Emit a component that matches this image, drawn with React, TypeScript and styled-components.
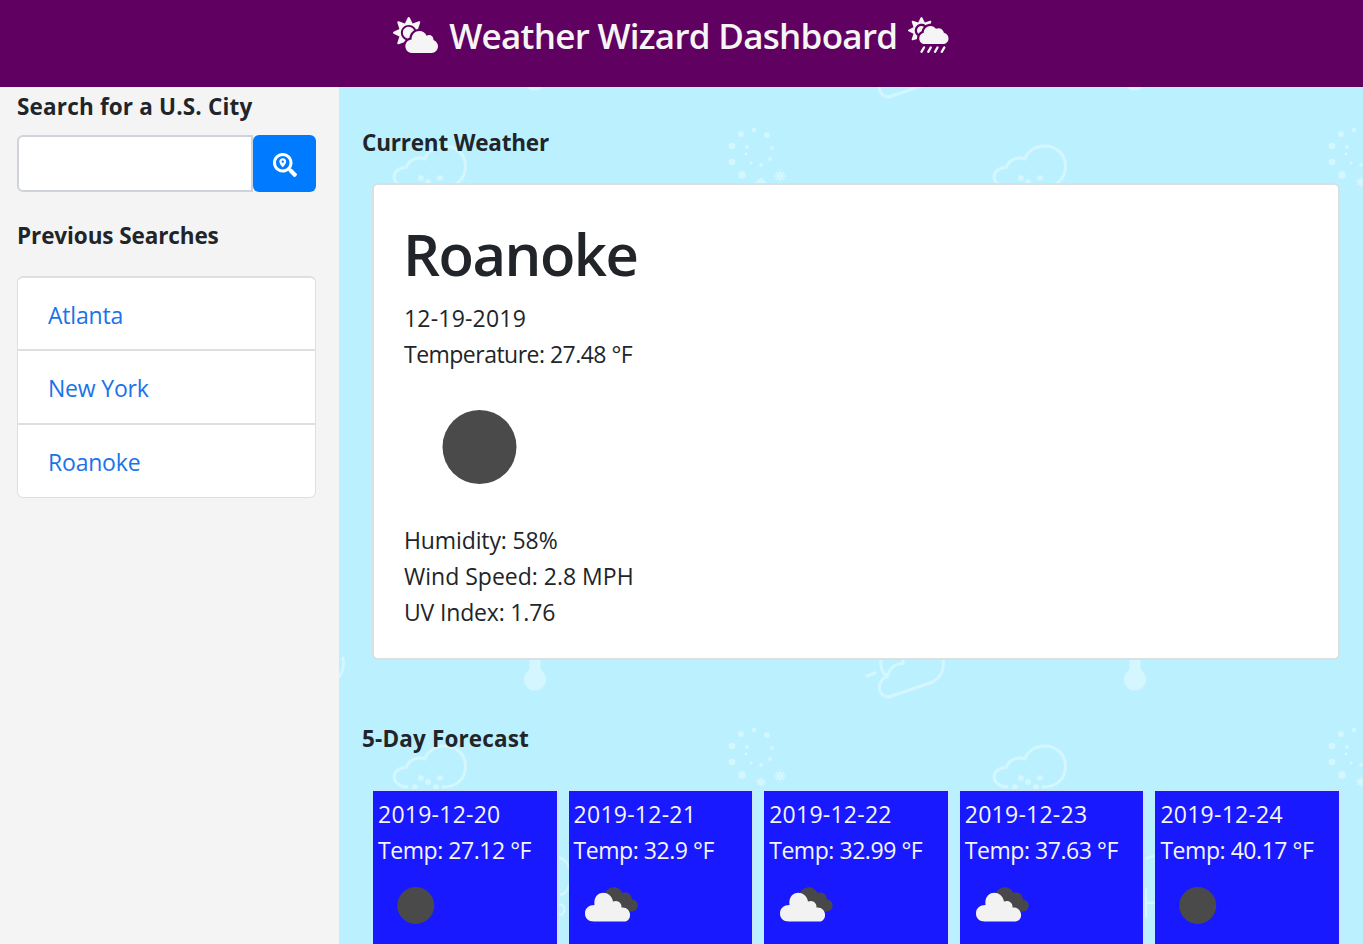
import React from 'react';
import styled, { createGlobalStyle } from 'styled-components';
import { FaCloudSun, FaCloudSunRain, FaSearchLocation } from 'react-icons/fa';

const GlobalStyle = createGlobalStyle`
  *, *::before, *::after { box-sizing: border-box; }
  body {
    margin: 0;
    height: 944px;
    overflow: hidden;
    font-family: "Open Sans", "Noto Sans", sans-serif;
    font-size: 23px;
    line-height: 36px;
    letter-spacing: -0.2px;
    color: #212529;
    background: #bbf0ff;
  }
`;

const Page = styled.div`
  display: flex;
  flex-direction: column;
  height: 944px;
`;

const Header = styled.header`
  display: flex;
  justify-content: center;
  gap: 11px;
  height: 87px;
  flex: none;
  padding: 14px 21px 0 0;
  background: #600060;
  color: #f5f5f5;
`;

const SunIcon = styled(FaCloudSun)`
  flex: none;
  width: 45px;
  height: 36px;
  margin-top: 3px;
`;

const RainIcon = styled(FaCloudSunRain)`
  flex: none;
  width: 40.5px;
  height: 36px;
  margin-top: 3px;
`;

const Title = styled.h1`
  margin: 0;
  font-size: 35px;
  font-weight: 600;
  line-height: 43px;
  letter-spacing: -0.72px;
  white-space: nowrap;
`;

const Body = styled.div`
  display: flex;
  flex: 1;
  min-height: 0;
`;

const Sidebar = styled.aside`
  width: 339px;
  flex: none;
  padding: 2px 23px 0 17px;
  background: #f4f4f4;
`;

const Heading = styled.h2<{ $spacing: number }>`
  margin: 0;
  font-size: 22.5px;
  line-height: 36px;
  font-weight: 700;
  letter-spacing: ${p => p.$spacing}px;
  white-space: nowrap;
`;

const SearchForm = styled.form`
  display: flex;
  height: 57px;
  margin: 10px 0 26px;
`;

const SearchInput = styled.input`
  width: 236px;
  border: 2px solid #ced4da;
  border-radius: 6px 0 0 6px;
  background: #fff;
  padding: 0 18px;
  font: inherit;
  outline: none;
`;

const SearchButton = styled.button`
  display: flex;
  align-items: center;
  justify-content: center;
  flex: 1;
  padding: 2px 0 0;
  border: 0;
  border-radius: 6px;
  background: #007bff;
  color: #fff;
`;

const CityList = styled.ul`
  list-style: none;
  margin: 22px 0 0;
  padding: 0;
  border: 1px solid #dfdfdf;
  border-top-width: 2px;
  border-radius: 6px;
  background: #fff;
`;

const CityItem = styled.li`
  height: 71px;
  padding: 19px 30px 0;
  color: #1a73e8;
  & + & {
    height: 74px;
    border-top: 2px solid #dfdfdf;
  }
`;

const Main = styled.main`
  position: relative;
  flex: 1;
  min-width: 0;
  padding: 38px 24px 0 23px;
  overflow: hidden;
`;

const Backdrop = styled.svg`
  position: absolute;
  inset: 0;
  width: 100%;
  height: 100%;
`;

const Content = styled.div`
  position: relative;
`;

const WeatherCard = styled.section`
  height: 477px;
  margin: 22px -1px 61px 10px;
  padding: 37px 30px 0;
  border: 2px solid #dadfe1;
  border-radius: 6px;
  background: #fff;
`;

const CityName = styled.h3`
  margin: 0 0 14px -1px;
  font-size: 58px;
  font-weight: 600;
  line-height: 64px;
  letter-spacing: -1.5px;
`;

const Line = styled.div<{ $spacing: number }>`
  height: 36px;
  letter-spacing: ${p => p.$spacing}px;
  white-space: nowrap;
`;

const CurrentIcon = styled.svg`
  display: block;
  width: 150px;
  height: 150px;
`;

const Forecast = styled.div`
  display: grid;
  grid-template-columns: repeat(5, 1fr);
  gap: 12px;
  margin: 34px 0 0 11px;
`;

const Day = styled.article`
  height: 160px;
  padding: 5px;
  background: #1919ff;
  color: #f5f5f5;
  box-shadow: 1px -1px 0 1px #cfe6f8;
`;

const DayIcon = styled.svg`
  display: block;
  width: 75px;
  height: 75px;
`;

const cities = ['Atlanta', 'New York', 'Roanoke'];

const days = [
  { date: '2019-12-20', temp: '27.12', clear: true },
  { date: '2019-12-21', temp: '32.9', clear: false },
  { date: '2019-12-22', temp: '32.99', clear: false },
  { date: '2019-12-23', temp: '37.63', clear: false },
  { date: '2019-12-24', temp: '40.17', clear: true },
];

const ringDots = [
  [391, 24, 3], [404, 20, 2.5], [417, 25, 3], [382, 36, 3.5], [382, 52, 3.5],
  [392, 65, 4], [397, 37, 2], [396, 44, 1.5], [401, 53, 1.5], [411, 55, 2],
  [420, 49, 2], [422, 38, 2],
];

const Flake = ({ x, y, r }: { x: number; y: number; r: number }) => (
  <path
    d={`M${x - r} ${y}h${2 * r}M${x} ${y - r}v${2 * r}M${x - r * 0.7} ${y - r * 0.7}l${r * 1.4} ${r * 1.4}M${x + r * 0.7} ${y - r * 0.7}l${-r * 1.4} ${r * 1.4}`}
    strokeWidth="1.800"
  />
);

const WeatherPattern = () => (
  <Backdrop aria-hidden="true">
    <defs>
      <pattern id="weather" x="11" y="23" width="600" height="600" patternUnits="userSpaceOnUse">
        <g fill="none" stroke="#d4f7ff" strokeWidth="3" strokeLinecap="round" strokeLinejoin="round">
          <path d="M57 77C40 76 40 58 56 57.500C59 50 67 46 75 49C77 42 85 36 94 36C108 36 116 46 115.500 57C115 69 107 77 93 77" />
          <path d="M531 548C530 556 532 563 537 566.500C527 570 526 586 539 587L580 573C590 569 595 560 593 548" />
          <path d="M537 566.500C540 557 546 553.500 553 553.500V548M517 566L525 563" />
        </g>
        <g fill="#d4f7ff">
          {[[71, 68], [90, 68], [78, 72], [65, 77], [86, 77]].map(([x, y]) => (
            <circle key={`${x}-${y}`} cx={x} cy={y} r="2.800" />
          ))}
          {ringDots.map(([x, y, r]) => <circle key={`${x}-${y}`} cx={x} cy={y} r={r * 0.95} />)}
          <rect x="179.500" y="510" width="11" height="60" />
          <circle cx="185" cy="569.500" r="11" />
        </g>
        <g stroke="#d4f7ff">
          <Flake x={430} y={66} r={5.5} />
          <Flake x={411} y={72} r={4.5} />
        </g>
        <g fill="none" stroke="#d4f7ff" strokeWidth="2.400">
          <path d="M207 147C213 148 218 152 219 159M219 175C218 180 215 184 210 185M207 195C217 191 217 208 207 204" />
          <path d="M194 149L204 146M196 178V208M193 193H206" />
        </g>
      </pattern>
    </defs>
    <rect width="100%" height="100%" fill="#bbf0ff" />
    <rect width="100%" height="100%" fill="url(#weather)" />
  </Backdrop>
);

const Clear = () => <circle cx="37.750" cy="37.500" r="18.500" fill="#4a4a4b" />;

const Clouds = () => (
  <>
    <path fill="#48484a" d="M29 30C31 18 44 15.500 48.500 25C54 23.500 57.500 26.500 58 31.500C66 32 65.500 44 57 43.500H40Z" />
    <path
      fill="#f2f2f2"
      d="M20 53.500C14 53.500 11 50 11 45.500C11 40 15 37 20.500 37C18.500 21.500 37 21 39 33.500C44 31.500 48 35 47.500 39.500C58 38.500 59 53.500 50 53.500Z"
    />
  </>
);

export default function App() {
  return (
    <Page>
      <GlobalStyle />
      <Header>
        <SunIcon />
        <Title>Weather Wizard Dashboard</Title>
        <RainIcon />
      </Header>
      <Body>
        <Sidebar>
          <Heading $spacing={0.17}>Search for a U.S. City</Heading>
          <SearchForm onSubmit={e => e.preventDefault()}>
            <SearchInput aria-label="City" />
            <SearchButton aria-label="Search"><FaSearchLocation size={24} /></SearchButton>
          </SearchForm>
          <Heading $spacing={-0.1}>Previous Searches</Heading>
          <CityList>
            {cities.map(city => <CityItem key={city}>{city}</CityItem>)}
          </CityList>
        </Sidebar>
        <Main>
          <WeatherPattern />
          <Content>
            <Heading $spacing={-0.2}>Current Weather</Heading>
            <WeatherCard>
              <CityName>Roanoke</CityName>
              <Line $spacing={0.2}>12-19-2019</Line>
              <Line $spacing={-0.52}>Temperature: 27.48 °F</Line>
              <CurrentIcon viewBox="0 0 75 75"><Clear /></CurrentIcon>
              <Line $spacing={-0.12}>Humidity: 58%</Line>
              <Line $spacing={0}>Wind Speed: 2.8 MPH</Line>
              <Line $spacing={-0.17}>UV Index: 1.76</Line>
            </WeatherCard>
            <Heading $spacing={0.15}>5-Day Forecast</Heading>
            <Forecast>
              {days.map(day => (
                <Day key={day.date}>
                  <Line $spacing={0.25}>{day.date}</Line>
                  <Line $spacing={-0.45}>Temp: {day.temp} °F</Line>
                  <DayIcon viewBox="0 0 75 75">{day.clear ? <Clear /> : <Clouds />}</DayIcon>
                </Day>
              ))}
            </Forecast>
          </Content>
        </Main>
      </Body>
    </Page>
  );
}
